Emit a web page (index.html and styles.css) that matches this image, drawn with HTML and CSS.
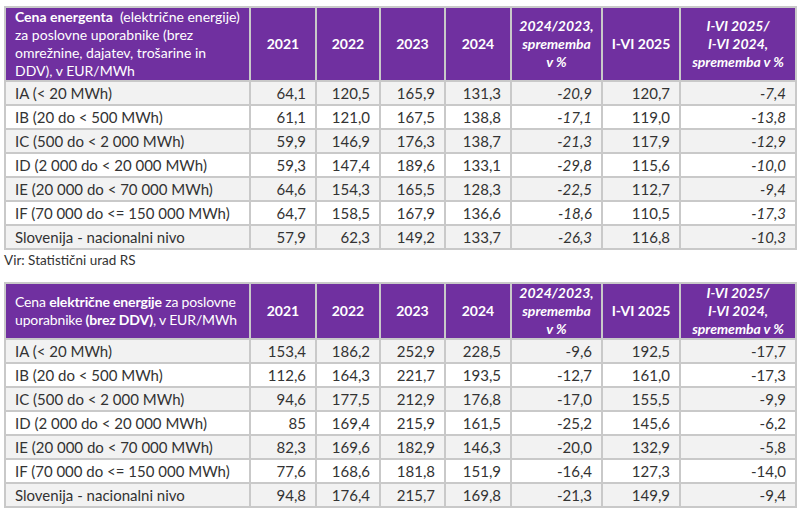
FILE: index.html
```html
<!DOCTYPE html>
<html lang="sl">
<head>
<meta charset="utf-8">
<title>Cene električne energije</title>
<link rel="stylesheet" href="styles.css">
</head>
<body>
<div class="page">
  <table class="grid">
    <colgroup>
      <col class="c-label"><col class="c-y"><col class="c-y2"><col class="c-y3"><col class="c-y"><col class="c-pct"><col class="c-h1"><col class="c-pct2">
    </colgroup>
    <thead>
      <tr class="head4">
        <th class="lbl"><b>Cena energenta</b>&nbsp; (električne energije) za poslovne uporabnike (brez omrežnine, dajatev, trošarine in DDV), v EUR/MWh</th>
        <th>2021</th><th>2022</th><th>2023</th><th>2024</th>
        <th class="it">2024/2023, sprememba v&nbsp;%</th>
        <th>I-VI 2025</th>
        <th class="it">I-VI 2025/<br>I-VI 2024,<br>sprememba v&nbsp;%</th>
      </tr>
    </thead>
    <tbody class="italic-pct">
      <tr><td class="lbl">IA (&lt; 20 MWh)</td><td>64,1</td><td>120,5</td><td>165,9</td><td>131,3</td><td class="p">-20,9</td><td>120,7</td><td class="p">-7,4</td></tr>
      <tr><td class="lbl">IB (20 do &lt; 500 MWh)</td><td>61,1</td><td>121,0</td><td>167,5</td><td>138,8</td><td class="p">-17,1</td><td>119,0</td><td class="p">-13,8</td></tr>
      <tr><td class="lbl">IC (500 do &lt; 2 000 MWh)</td><td>59,9</td><td>146,9</td><td>176,3</td><td>138,7</td><td class="p">-21,3</td><td>117,9</td><td class="p">-12,9</td></tr>
      <tr><td class="lbl">ID (2 000 do &lt; 20 000 MWh)</td><td>59,3</td><td>147,4</td><td>189,6</td><td>133,1</td><td class="p">-29,8</td><td>115,6</td><td class="p">-10,0</td></tr>
      <tr><td class="lbl">IE (20 000 do &lt; 70 000 MWh)</td><td>64,6</td><td>154,3</td><td>165,5</td><td>128,3</td><td class="p">-22,5</td><td>112,7</td><td class="p">-9,4</td></tr>
      <tr><td class="lbl">IF (70 000 do &lt;= 150 000 MWh)</td><td>64,7</td><td>158,5</td><td>167,9</td><td>136,6</td><td class="p">-18,6</td><td>110,5</td><td class="p">-17,3</td></tr>
      <tr><td class="lbl">Slovenija - nacionalni nivo</td><td>57,9</td><td>62,3</td><td>149,2</td><td>133,7</td><td class="p">-26,3</td><td>116,8</td><td class="p">-10,3</td></tr>
    </tbody>
  </table>
  <p class="source">Vir: Statistični urad RS</p>
  <table class="grid">
    <colgroup>
      <col class="c-label"><col class="c-y"><col class="c-y2"><col class="c-y3"><col class="c-y"><col class="c-pct"><col class="c-h1"><col class="c-pct2">
    </colgroup>
    <thead>
      <tr class="head3">
        <th class="lbl tight">Cena <b>električne energije</b> za poslovne uporabnike <b>(brez DDV)</b>, v EUR/MWh</th>
        <th>2021</th><th>2022</th><th>2023</th><th>2024</th>
        <th class="it">2024/2023, sprememba v&nbsp;%</th>
        <th>I-VI 2025</th>
        <th class="it">I-VI 2025/<br>I-VI 2024,<br>sprememba v&nbsp;%</th>
      </tr>
    </thead>
    <tbody>
      <tr><td class="lbl">IA (&lt; 20 MWh)</td><td>153,4</td><td>186,2</td><td>252,9</td><td>228,5</td><td>-9,6</td><td>192,5</td><td>-17,7</td></tr>
      <tr><td class="lbl">IB (20 do &lt; 500 MWh)</td><td>112,6</td><td>164,3</td><td>221,7</td><td>193,5</td><td>-12,7</td><td>161,0</td><td>-17,3</td></tr>
      <tr><td class="lbl">IC (500 do &lt; 2 000 MWh)</td><td>94,6</td><td>177,5</td><td>212,9</td><td>176,8</td><td>-17,0</td><td>155,5</td><td>-9,9</td></tr>
      <tr><td class="lbl">ID (2 000 do &lt; 20 000 MWh)</td><td>85</td><td>169,4</td><td>215,9</td><td>161,5</td><td>-25,2</td><td>145,6</td><td>-6,2</td></tr>
      <tr><td class="lbl">IE (20 000 do &lt; 70 000 MWh)</td><td>82,3</td><td>169,6</td><td>182,9</td><td>146,3</td><td>-20,0</td><td>132,9</td><td>-5,8</td></tr>
      <tr><td class="lbl">IF (70 000 do &lt;= 150 000 MWh)</td><td>77,6</td><td>168,6</td><td>181,8</td><td>151,9</td><td>-16,4</td><td>127,3</td><td>-14,0</td></tr>
      <tr><td class="lbl">Slovenija - nacionalni nivo</td><td>94,8</td><td>176,4</td><td>215,7</td><td>169,8</td><td>-21,3</td><td>149,9</td><td>-9,4</td></tr>
    </tbody>
  </table>
</div>
</body>
</html>
```
FILE: styles.css
```css
html, body {
  margin: 0;
  padding: 0;
  background: #ffffff;
}
body {
  font-family: Lato, "Open Sans", "DejaVu Sans", sans-serif;
  font-size: 15px;
  color: #333333;
}
.page {
  padding: 6px 4px 0 4px;
  width: 791px;
}
.grid {
  border-collapse: collapse;
  table-layout: fixed;
  width: 791px;
}
.c-label { width: 245px; }
.c-y { width: 66px; }
.c-y2 { width: 64px; }
.c-y3 { width: 65px; }
.c-pct { width: 91px; }
.c-h1 { width: 78px; }
.c-pct2 { width: 116px; }

.grid th, .grid td {
  border: 2px solid #c9c9c9;
}
.grid th {
  background: #7030a0;
  color: #ffffff;
  font-size: 14px;
  font-weight: 700;
  text-align: center;
  vertical-align: middle;
  line-height: 18px;
  padding: 0 4px;
}
.grid th.lbl {
  text-align: left;
  font-weight: 400;
  padding: 0 4px 0 9px;
}
.grid th.tight { letter-spacing: -0.15px; }
.grid th.lbl b { font-weight: 700; }
.grid th.it { font-style: italic; }
.head4 th { height: 72px; }
.head3 th { height: 53px; }

.grid td {
  height: 22px;
  padding: 0 9px;
  text-align: right;
  vertical-align: middle;
  line-height: 20px;
  white-space: nowrap;
}
.grid td.lbl { text-align: left; }
.grid tbody tr:nth-child(odd) td { background: #f2f2f2; }
.grid tbody tr:nth-child(even) td { background: #ffffff; }
.italic-pct td.p { font-style: italic; }

.source {
  margin: 0;
  height: 32px;
  line-height: 21px;
  font-size: 13.5px;
  color: #333333;
}
```
